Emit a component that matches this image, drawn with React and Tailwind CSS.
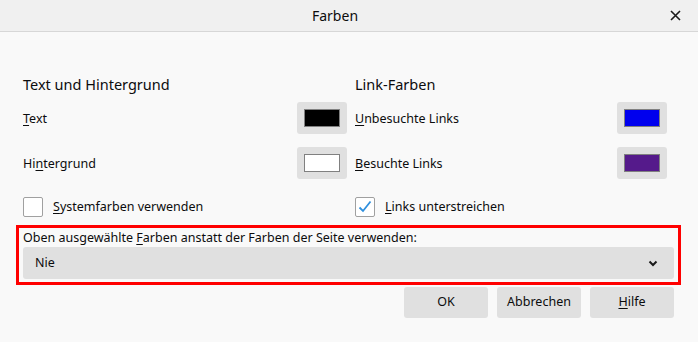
import React from 'react'

const font = { fontFamily: '"Noto Sans", "Open Sans", sans-serif' }

// label with an underlined access key
const AccessLabel = ({ text, keyIndex }) => (
  <span>
    {text.slice(0, keyIndex)}
    <span className="underline underline-offset-2">{text[keyIndex]}</span>
    {text.slice(keyIndex + 1)}
  </span>
)

const Swatch = ({ color }) => (
  <button className="flex h-[32px] w-[50px] items-center justify-center rounded-[3px] bg-[#e0e0e0]">
    <span className="block h-[18px] w-[36px] border border-[#808080]" style={{ background: color }} />
  </button>
)

const ColorRow = ({ label, keyIndex, color }) => (
  <div className="flex items-center justify-between">
    <span className="pt-[2px] text-[12.5px]">
      <AccessLabel text={label} keyIndex={keyIndex} />
    </span>
    <Swatch color={color} />
  </div>
)

const Checkbox = ({ checked, label, keyIndex }) => (
  <label className="flex items-center gap-[10px] text-[12.5px]">
    <span className="flex h-[20px] w-[20px] items-center justify-center rounded-[2px] border border-[#a0a0a0] bg-white">
      {checked && (
        <svg width="14" height="14" viewBox="0 0 14 14">
          <path d="M1.5 7.5 L5 11 L12.5 1.5" fill="none" stroke="#2f8fdd" strokeWidth="1.8" />
        </svg>
      )}
    </span>
    <AccessLabel text={label} keyIndex={keyIndex} />
  </label>
)

export default function App() {
  return (
    <div className="flex h-[342px] w-[698px] flex-col bg-[#f9f9f9] text-[#0c0c0d]" style={font}>
      {/* title bar */}
      <div className="flex h-[32px] shrink-0 items-center border-b border-[#d7d7d7] bg-[#f0f0f0]">
        <div className="flex-1 text-center text-[14px]">Farben</div>
        <div className="flex w-[28px] items-center justify-start">
          <svg width="11" height="11" viewBox="0 0 11 11">
            <path d="M1 1 L10 10 M10 1 L1 10" stroke="#1a1a1a" strokeWidth="1.6" />
          </svg>
        </div>
      </div>

      <div className="flex gap-[8px] pl-[23px] pt-[42px]">
        <div className="flex w-[324px] flex-col">
          <h2 className="text-[14.5px] leading-[20px]">Text und Hintergrund</h2>
          <div className="mt-[8px] flex flex-col gap-[13px]">
            <ColorRow label="Text" keyIndex={0} color="#000000" />
            <ColorRow label="Hintergrund" keyIndex={2} color="#ffffff" />
          </div>
          <div className="mt-[18px]">
            <Checkbox label="Systemfarben verwenden" keyIndex={0} />
          </div>
        </div>
        <div className="flex w-[312px] flex-col">
          <h2 className="text-[14.5px] leading-[20px]">Link-Farben</h2>
          <div className="mt-[8px] flex flex-col gap-[13px]">
            <ColorRow label="Unbesuchte Links" keyIndex={0} color="#0000ee" />
            <ColorRow label="Besuchte Links" keyIndex={0} color="#551a8b" />
          </div>
          <div className="mt-[18px]">
            <Checkbox checked label="Links unterstreichen" keyIndex={0} />
          </div>
        </div>
      </div>

      <div className="ml-[16px] mt-[8px] w-[665px] border-[3px] border-[#ff0000] px-[4px] pb-[3px]">
        <div className="text-[12.5px] leading-[19px]">
          Oben ausgewählte <AccessLabel text="Farben" keyIndex={0} /> anstatt der Farben der Seite verwenden:
        </div>
        <button className="flex h-[32px] w-full items-center justify-between rounded-[3px] bg-[#e0e0e0] pl-[12px] pr-[16px] text-[12.5px]">
          <span>Nie</span>
          <svg width="10" height="7" viewBox="0 0 10 7">
            <path d="M1.5 1.5 L5 5 L8.5 1.5" fill="none" stroke="#1a1a1a" strokeWidth="2" />
          </svg>
        </button>
      </div>

      <div className="ml-auto mr-[24px] mt-[2px] flex gap-[9px] text-[12.5px]">
        <button className="h-[31px] w-[84px] rounded-[3px] bg-[#e0e0e0]">OK</button>
        <button className="h-[31px] w-[84px] rounded-[3px] bg-[#e0e0e0]">Abbrechen</button>
        <button className="h-[31px] w-[84px] rounded-[3px] bg-[#e0e0e0]">
          <AccessLabel text="Hilfe" keyIndex={0} />
        </button>
      </div>
    </div>
  )
}
